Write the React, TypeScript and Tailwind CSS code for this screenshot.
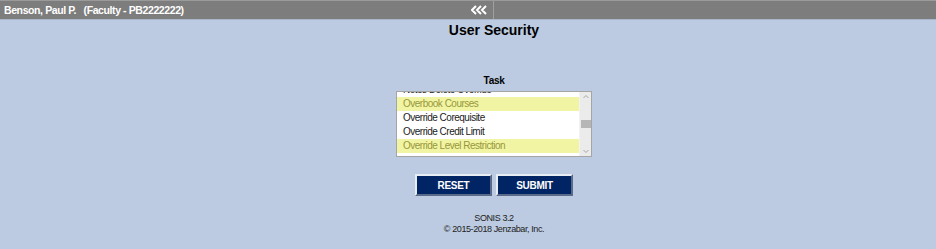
export default function App() {
  const rows = [
    { label: "Notes Delete Override", hi: false },
    { label: "Overbook Courses", hi: true },
    { label: "Override Corequisite", hi: false },
    { label: "Override Credit Limit", hi: false },
    { label: "Override Level Restriction", hi: true },
  ];

  return (
    <div className="w-[936px] h-[249px] bg-[#bccbe1] font-['Liberation_Sans',Arial,sans-serif] overflow-hidden">
      {/* top bar */}
      <div className="h-[20px] bg-[#7d7d7d] border-t border-[#9a9a9a] border-b border-b-[#a9b6cc] flex items-center">
        <div className="w-[494px] h-full flex items-center justify-between pl-[4px] pr-[6px] border-r border-[#a0a0a0]">
          <span className="text-white font-bold text-[10.5px] tracking-[-0.4px] whitespace-pre leading-none">
            Benson, Paul P.   (Faculty - PB2222222)
          </span>
          <svg width="16" height="10" viewBox="0 0 16 10">
            <path d="M5 1 L1 5 L5 9 M10 1 L6 5 L10 9 M15 1 L11 5 L15 9" fill="none" stroke="#ffffff" strokeWidth="2" />
          </svg>
        </div>
        <div className="flex-1" />
      </div>

      <div className="pl-[52px] flex flex-col items-center">
        <h1 className="mt-[2px] text-[14px] font-bold text-black leading-[17px]">User Security</h1>

        <div className="mt-[36px] text-[10px] tracking-[-0.3px] font-bold text-black leading-[11px]">Task</div>

        <div className="mt-[5px] w-[196px] h-[66px] bg-white border border-[#a5a5a5] flex overflow-hidden">
          <div className="flex-1 relative overflow-hidden">
            <div className="absolute left-0 right-0 top-[-9px]">
              {rows.map((r) => (
                <div
                  key={r.label}
                  className={`h-[14px] pl-[6px] text-[10px] tracking-[-0.5px] leading-[14px] whitespace-nowrap ${
                    r.hi ? "bg-[#f0f4a3] text-[#99973a]" : "text-[#222222]"
                  }`}
                >
                  {r.label}
                </div>
              ))}
            </div>
          </div>
          <div className="w-[12px] bg-[#ebebeb] border-l border-[#f2f2f2] flex flex-col items-center">
            <svg width="8" height="8" viewBox="0 0 8 8" className="mt-[1px]">
              <path d="M1.5 5 L4 2.5 L6.5 5" fill="none" stroke="#a8a8a8" strokeWidth="1" />
            </svg>
            <div className="mt-[19px] w-[10px] h-[8px] bg-[#b6b6b6]" />
            <div className="flex-1" />
            <svg width="8" height="8" viewBox="0 0 8 8" className="mb-[1px]">
              <path d="M1.5 3 L4 5.5 L6.5 3" fill="none" stroke="#a8a8a8" strokeWidth="1" />
            </svg>
          </div>
        </div>

        <div className="mt-[17px] flex gap-[4px]">
          <button className="w-[77px] h-[22px] bg-[#012564] text-white text-[10px] tracking-[-0.3px] font-bold border-2 border-t-[#e8ecf3] border-l-[#e8ecf3] border-r-[#5a6b8a] border-b-[#5a6b8a]">
            RESET
          </button>
          <button className="w-[77px] h-[22px] bg-[#012564] text-white text-[10px] tracking-[-0.3px] font-bold border-2 border-t-[#e8ecf3] border-l-[#e8ecf3] border-r-[#5a6b8a] border-b-[#5a6b8a]">
            SUBMIT
          </button>
        </div>

        <div className="mt-[17px] text-[9px] tracking-[-0.4px] leading-[11px] text-[#222222] text-center">
          <div>SONIS 3.2</div>
          <div>© 2015-2018 Jenzabar, Inc.</div>
        </div>
      </div>
    </div>
  );
}
